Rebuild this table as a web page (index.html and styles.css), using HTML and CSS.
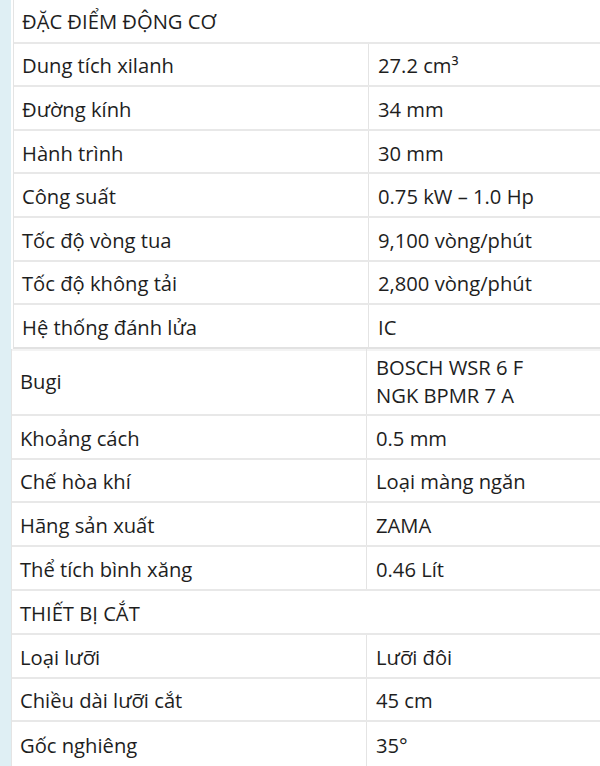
FILE: index.html
```html
<!DOCTYPE html>
<html lang="vi">
<head>
<meta charset="utf-8">
<link rel="stylesheet" href="styles.css">
</head>
<body>
<div class="page">
  <div class="strip"></div>
  <div class="content">
    <div class="spec spec-top">
      <div class="row head"><div class="cell full">ĐẶC ĐIỂM ĐỘNG CƠ</div></div>
      <div class="row"><div class="cell key">Dung tích xilanh</div><div class="cell val">27.2 cm³</div></div>
      <div class="row"><div class="cell key">Đường kính</div><div class="cell val">34 mm</div></div>
      <div class="row"><div class="cell key">Hành trình</div><div class="cell val">30 mm</div></div>
      <div class="row"><div class="cell key">Công suất</div><div class="cell val">0.75 kW – 1.0 Hp</div></div>
      <div class="row"><div class="cell key">Tốc độ vòng tua</div><div class="cell val">9,100 vòng/phút</div></div>
      <div class="row"><div class="cell key">Tốc độ không tải</div><div class="cell val">2,800 vòng/phút</div></div>
      <div class="row"><div class="cell key">Hệ thống đánh lửa</div><div class="cell val">IC</div></div>
    </div>
    <div class="spec spec-bottom">
      <div class="row tall"><div class="cell key">Bugi</div><div class="cell val">BOSCH WSR 6 F<br>NGK BPMR 7 A</div></div>
      <div class="row"><div class="cell key">Khoảng cách</div><div class="cell val">0.5 mm</div></div>
      <div class="row"><div class="cell key">Chế hòa khí</div><div class="cell val">Loại màng ngăn</div></div>
      <div class="row"><div class="cell key">Hãng sản xuất</div><div class="cell val">ZAMA</div></div>
      <div class="row"><div class="cell key">Thể tích bình xăng</div><div class="cell val">0.46 Lít</div></div>
      <div class="row head"><div class="cell full">THIẾT BỊ CẮT</div></div>
      <div class="row"><div class="cell key">Loại lưỡi</div><div class="cell val">Lưỡi đôi</div></div>
      <div class="row"><div class="cell key">Chiều dài lưỡi cắt</div><div class="cell val">45 cm</div></div>
      <div class="row"><div class="cell key">Gốc nghiêng</div><div class="cell val">35°</div></div>
    </div>
  </div>
</div>
</body>
</html>
```
FILE: styles.css
```css
html, body {
  margin: 0;
  padding: 0;
  background: #ffffff;
}
body {
  font-family: "Open Sans", "Noto Sans", sans-serif;
  font-size: 20.2px;
  color: #1e1e1e;
  width: 600px;
  height: 766px;
  overflow: hidden;
}
.page {
  display: flex;
  height: 766px;
}
.strip {
  width: 11px;
  flex: none;
  background: #dfeff4;
}
.content {
  flex: 1;
  display: flex;
  flex-direction: column;
}
.spec {
  display: flex;
  flex-direction: column;
  border-left: 1px solid #e4e4e4;
}
.spec-top {
  margin-left: 2px;
  border-bottom: 2px solid #e2e2e2;
}
.spec-bottom {
  margin-left: 0;
  box-shadow: inset 0 2px 0 #f3f3f3;
}
.row {
  display: grid;
  grid-template-columns: 355px 1fr;
  height: 43.6px;
  box-sizing: border-box;
  border-bottom: 2px solid #e8e8e8;
}
.spec-bottom .row {
  height: 43.8px;
}
.spec-top .row:last-child {
  border-bottom: none;
  height: 41.6px;
}
.spec-bottom .row:last-child {
  border-bottom: none;
}
.spec-bottom .row.tall {
  height: 67px;
}
.cell {
  display: flex;
  align-items: center;
  line-height: 28px;
  white-space: nowrap;
  padding-top: 2px;
  box-sizing: border-box;
}
.head .cell {
  padding-top: 0;
}
.spec-bottom .head .cell {
  padding-top: 2px;
}
.spec-bottom .row.tall .cell {
  padding-top: 0;
}
.key {
  padding-left: 8px;
  border-right: 1px solid #e4e4e4;
}
.val {
  padding-left: 9px;
}
.full {
  grid-column: 1 / -1;
  padding-left: 8px;
}
```
